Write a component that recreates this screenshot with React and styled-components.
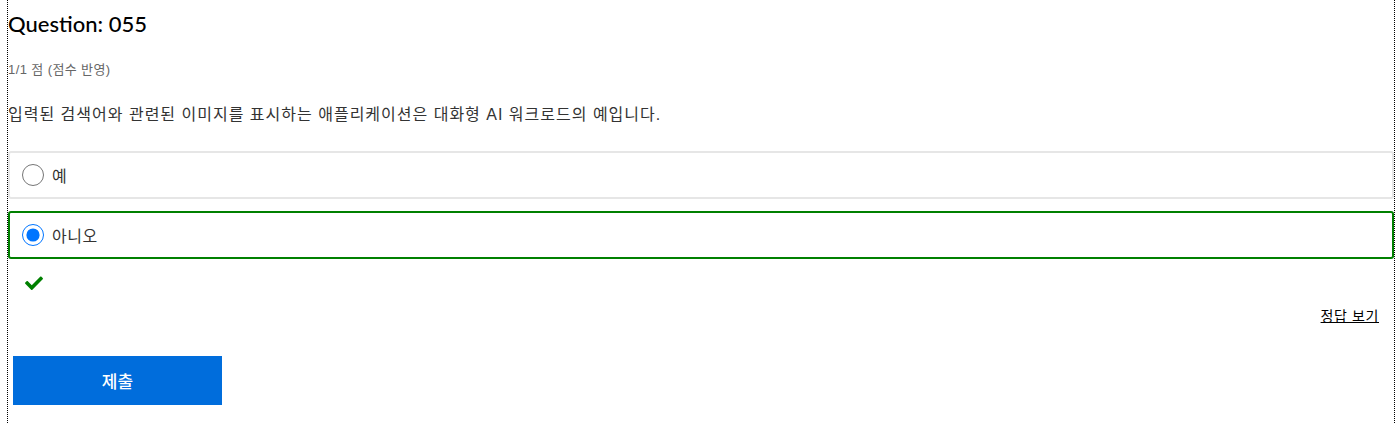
import React, { useState } from 'react'
import styled, { createGlobalStyle } from 'styled-components'

const GlobalStyle = createGlobalStyle`
    body {
        margin: 0;
        background: #fff;
        font-family: "Liberation Sans", "Noto Sans CJK KR", sans-serif;
    }
`

const Page = styled.div`
    box-sizing: border-box;
    min-height: 100vh;
    margin-left: 7px;
    width: 1388px;
    border-left: 1px dotted #000;
    border-right: 1px dotted #000;
    padding-top: 9px;
    padding-bottom: 18px;
`

const Title = styled.h2`
    margin: 0;
    font-family: "Lato", "Noto Sans", sans-serif;
    font-weight: 500;
    font-size: 22px;
    line-height: 30px;
    color: #000;
`

const Score = styled.div`
    margin-top: 22px;
    font-size: 13px;
    letter-spacing: 0.4px;
    line-height: 18px;
    color: #666;
`

const Prompt = styled.p`
    margin: 25px 0 0;
    font-size: 16px;
    letter-spacing: 1px;
    line-height: 22px;
    color: #333;
`

const Options = styled.div`
    margin-top: 25px;
    display: flex;
    flex-direction: column;
    gap: 12px;
`

const Option = styled.label`
    display: flex;
    align-items: center;
    gap: 8px;
    height: 44px;
    padding-left: 12px;
    border: 2px solid ${p => (p.$correct ? '#008000' : '#e6e6e6')};
    border-radius: 3px;
    font-size: 16px;
    letter-spacing: 0.5px;
    color: #333;
    cursor: pointer;
`

const Radio = styled.input`
    margin: 0;
    width: 22px;
    height: 22px;
    accent-color: #0075ff;
`

const Feedback = styled.div`
    height: 48px;
    padding-left: 17px;
    display: flex;
    align-items: center;
`

const Check = styled.svg`
    width: 18px;
    height: 14px;
    fill: #008000;
`

const LinkRow = styled.div`
    display: flex;
    justify-content: flex-end;
    padding-right: 15px;
`

const ShowAnswer = styled.a`
    font-size: 14px;
    letter-spacing: 0.6px;
    line-height: 18px;
    color: #000;
    text-decoration: underline;
    cursor: pointer;
`

const Submit = styled.button`
    display: block;
    margin: 31px 0 0 5px;
    width: 209px;
    height: 49px;
    border: none;
    background-color: #006ddc;
    color: #fff;
    font-family: inherit;
    font-size: 17px;
    font-weight: 500;
    cursor: pointer;
`

const choices = [
    { id: 'yes', label: '예' },
    { id: 'no', label: '아니오' },
]

function App() {
    const [picked, setPicked] = useState('no')

    return (
        <Page>
            <GlobalStyle />
            <Title>Question: 055</Title>
            <Score>1/1 점 (점수 반영)</Score>
            <Prompt>입력된 검색어와 관련된 이미지를 표시하는 애플리케이션은 대화형 AI 워크로드의 예입니다.</Prompt>
            <Options>
                {choices.map(c => (
                    <Option key={c.id} $correct={c.id === 'no' && picked === 'no'}>
                        <Radio
                            type="radio"
                            name="answer"
                            checked={picked === c.id}
                            onChange={() => setPicked(c.id)}
                        />
                        {c.label}
                    </Option>
                ))}
            </Options>
            <Feedback>
                <Check viewBox="0 0 512 400">
                    <path d="M173.9 389.8L7.5 223.4c-10-10-10-26.2 0-36.2l36.2-36.2c10-10 26.2-10 36.2 0L192 263.1 432.1 23c10-10 26.2-10 36.2 0l36.2 36.2c10 10 10 26.2 0 36.2L210.1 389.8c-10 10-26.2 10-36.2 0z" />
                </Check>
            </Feedback>
            <LinkRow>
                <ShowAnswer>정답 보기</ShowAnswer>
            </LinkRow>
            <Submit>제출</Submit>
        </Page>
    )
}

export default App
